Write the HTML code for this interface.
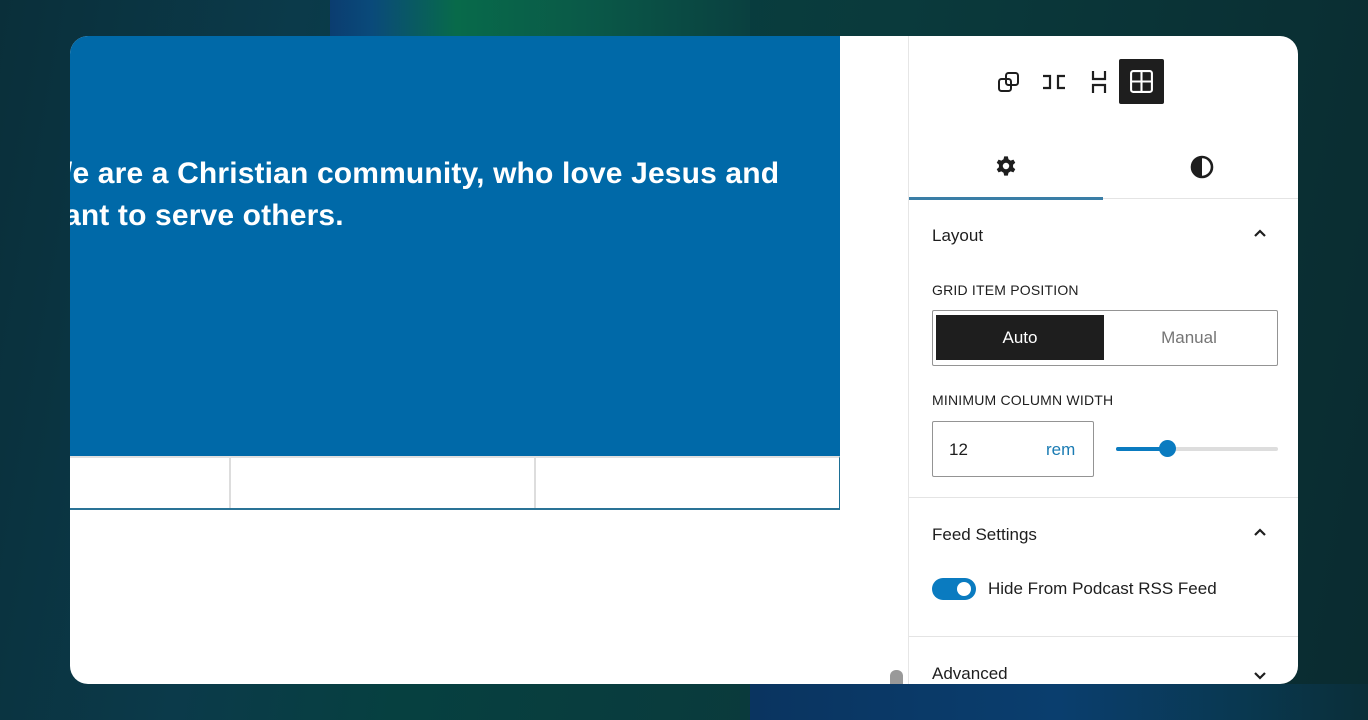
<!DOCTYPE html>
<html><head><style>
*{margin:0;padding:0;box-sizing:border-box}
body{width:1368px;height:720px;overflow:hidden;font-family:"Liberation Sans",sans-serif;position:relative;
background:linear-gradient(100deg,#0a2f3a 0%,#0b3a4a 20%,#064040 35%,#0a3a3c 60%,#0a2b30 100%);}
.bg2{position:absolute;left:330px;top:0;width:420px;height:40px;background:linear-gradient(90deg,#0b3d70,#0a4a7a 10%,#086a4a 30%,#0a5a48 60%,#0a4040);}
.bg3{position:absolute;left:750px;top:684px;width:618px;height:36px;background:linear-gradient(90deg,#0a3460,#0a3e6e 50%,#093850 80%,#0a2e38);}
.card{position:absolute;left:70px;top:36px;width:1228px;height:648px;background:#fff;border-radius:18px;overflow:hidden}
.blue{position:absolute;left:0;top:0;width:770px;height:420px;background:#0069a8}
.txt{position:absolute;left:-6px;top:117px;color:#fff;font-size:30px;line-height:42px;font-weight:bold;letter-spacing:0.15px;white-space:nowrap}
.row{position:absolute;left:0;top:420px;width:770px;height:54px;border:1px solid #1d6f95;border-left:none;border-top:2px solid #e0e0e0;border-bottom:2px solid #2a7396}
.row i{position:absolute;top:0;bottom:0;width:2px;background:#ddd}
.side{position:absolute;left:838px;top:0;width:390px;height:648px;border-left:1px solid #e6e6e6}
.hr{position:absolute;left:0;right:0;height:1px;background:#e4e4e4}
.lbl{position:absolute;left:23px;font-size:14px;color:#1e1e1e;letter-spacing:.2px}
.h{position:absolute;left:23px;font-size:17px;color:#1e1e1e}
.chev{position:absolute;left:344px;width:14px;height:14px}
</style></head><body>
<div class="bg2"></div><div class="bg3"></div>
<div class="card">
 <div class="blue"><div class="txt">/e are a Christian community, who love Jesus and<br>ant to serve others.</div></div>
 <div class="row"><i style="left:159px"></i><i style="left:464px"></i></div>
 <div style="position:absolute;left:820px;top:634px;width:13px;height:20px;border-radius:6px;background:#999"></div>
 <div class="side">
  <svg style="position:absolute;left:88px;top:34px" width="24" height="24" viewBox="0 0 24 24" fill="none" stroke="#1e1e1e" stroke-width="2"><rect x="2" y="9" width="12" height="12" rx="2.5"/><rect x="9" y="3" width="12" height="12" rx="2.5"/></svg>
  <svg style="position:absolute;left:133px;top:34px" width="24" height="24" viewBox="0 0 24 24" fill="none" stroke="#1e1e1e" stroke-width="2.2"><path d="M1 6h7v12H1M23 6h-7v12h7"/></svg>
  <svg style="position:absolute;left:178px;top:34px" width="24" height="24" viewBox="0 0 24 24" fill="none" stroke="#1e1e1e" stroke-width="2.2"><path d="M6 1v8h12V1M6 23v-8h12v8"/></svg>
  <div style="position:absolute;left:210px;top:23px;width:45px;height:45px;background:#1e1e1e;border-radius:2px"></div>
  <svg style="position:absolute;left:220px;top:33px" width="25" height="25" viewBox="0 0 24 24" fill="none" stroke="#fff" stroke-width="2"><rect x="2" y="2" width="20" height="20" rx="2"/><path d="M12 2v20M2 12h20"/></svg>
  <svg style="position:absolute;left:86px;top:119px" width="22" height="22" viewBox="0 0 24 24"><path fill="#1e1e1e" d="M10 1.5h4l.7 3.2 2.4 1.4 3-1.1 2 3.5-2.4 2.1v2.8l2.4 2.1-2 3.5-3-1.1-2.4 1.4-.7 3.2h-4l-.7-3.2-2.4-1.4-3 1.1-2-3.5 2.4-2.1v-2.8L1.9 8.5l2-3.5 3 1.1 2.4-1.4z"/><circle cx="12" cy="12" r="3.5" fill="#fff"/></svg>
  <svg style="position:absolute;left:281px;top:119px" width="24" height="24" viewBox="0 0 24 24"><circle cx="12" cy="12" r="10" fill="none" stroke="#1e1e1e" stroke-width="2.6"/><path d="M12 2a10 10 0 0 0 0 20z" fill="#1e1e1e"/></svg>
  <div class="hr" style="top:162px"></div>
  <div style="position:absolute;left:0;top:161px;width:194px;height:3px;background:#3a7ea6"></div>
  <div class="h" style="top:190px">Layout</div>
  <svg class="chev" style="top:191px" viewBox="0 0 14 14" fill="none" stroke="#1e1e1e" stroke-width="2.2"><path d="M2 9l5-5 5 5"/></svg>
  <div class="lbl" style="top:246px">GRID ITEM POSITION</div>
  <div style="position:absolute;left:23px;top:274px;width:346px;height:56px;border:1px solid #949494;border-radius:2px"></div>
  <div style="position:absolute;left:27px;top:279px;width:168px;height:45px;background:#1e1e1e;color:#fff;font-size:17px;text-align:center;line-height:45px">Auto</div>
  <div style="position:absolute;left:195px;top:279px;width:170px;height:45px;color:#757575;font-size:17px;text-align:center;line-height:45px">Manual</div>
  <div class="lbl" style="top:356px">MINIMUM COLUMN WIDTH</div>
  <div style="position:absolute;left:23px;top:385px;width:162px;height:56px;border:1px solid #949494;border-radius:2px"></div>
  <div style="position:absolute;left:40px;top:404px;font-size:17px;color:#1e1e1e">12</div>
  <div style="position:absolute;left:137px;top:404px;font-size:17px;color:#1a7bb3">rem</div>
  <div style="position:absolute;left:207px;top:411px;width:162px;height:4px;background:#ddd;border-radius:2px"></div>
  <div style="position:absolute;left:207px;top:411px;width:52px;height:4px;background:#0a7bc0;border-radius:2px"></div>
  <div style="position:absolute;left:250px;top:404px;width:17px;height:17px;background:#0a7bc0;border-radius:50%"></div>
  <div class="hr" style="top:461px"></div>
  <div class="h" style="top:489px">Feed Settings</div>
  <svg class="chev" style="top:490px" viewBox="0 0 14 14" fill="none" stroke="#1e1e1e" stroke-width="2.2"><path d="M2 9l5-5 5 5"/></svg>
  <div style="position:absolute;left:23px;top:542px;width:44px;height:22px;background:#0a7bc0;border-radius:11px"></div>
  <div style="position:absolute;left:48px;top:546px;width:14px;height:14px;background:#fff;border-radius:50%"></div>
  <div style="position:absolute;left:79px;top:543px;font-size:17px;color:#1e1e1e">Hide From Podcast RSS Feed</div>
  <div class="hr" style="top:600px"></div>
  <div class="h" style="top:628px">Advanced</div>
  <svg class="chev" style="top:632px" viewBox="0 0 14 14" fill="none" stroke="#1e1e1e" stroke-width="2.2"><path d="M2 5l5 5 5-5"/></svg>
 </div>
</div>
</body></html>
